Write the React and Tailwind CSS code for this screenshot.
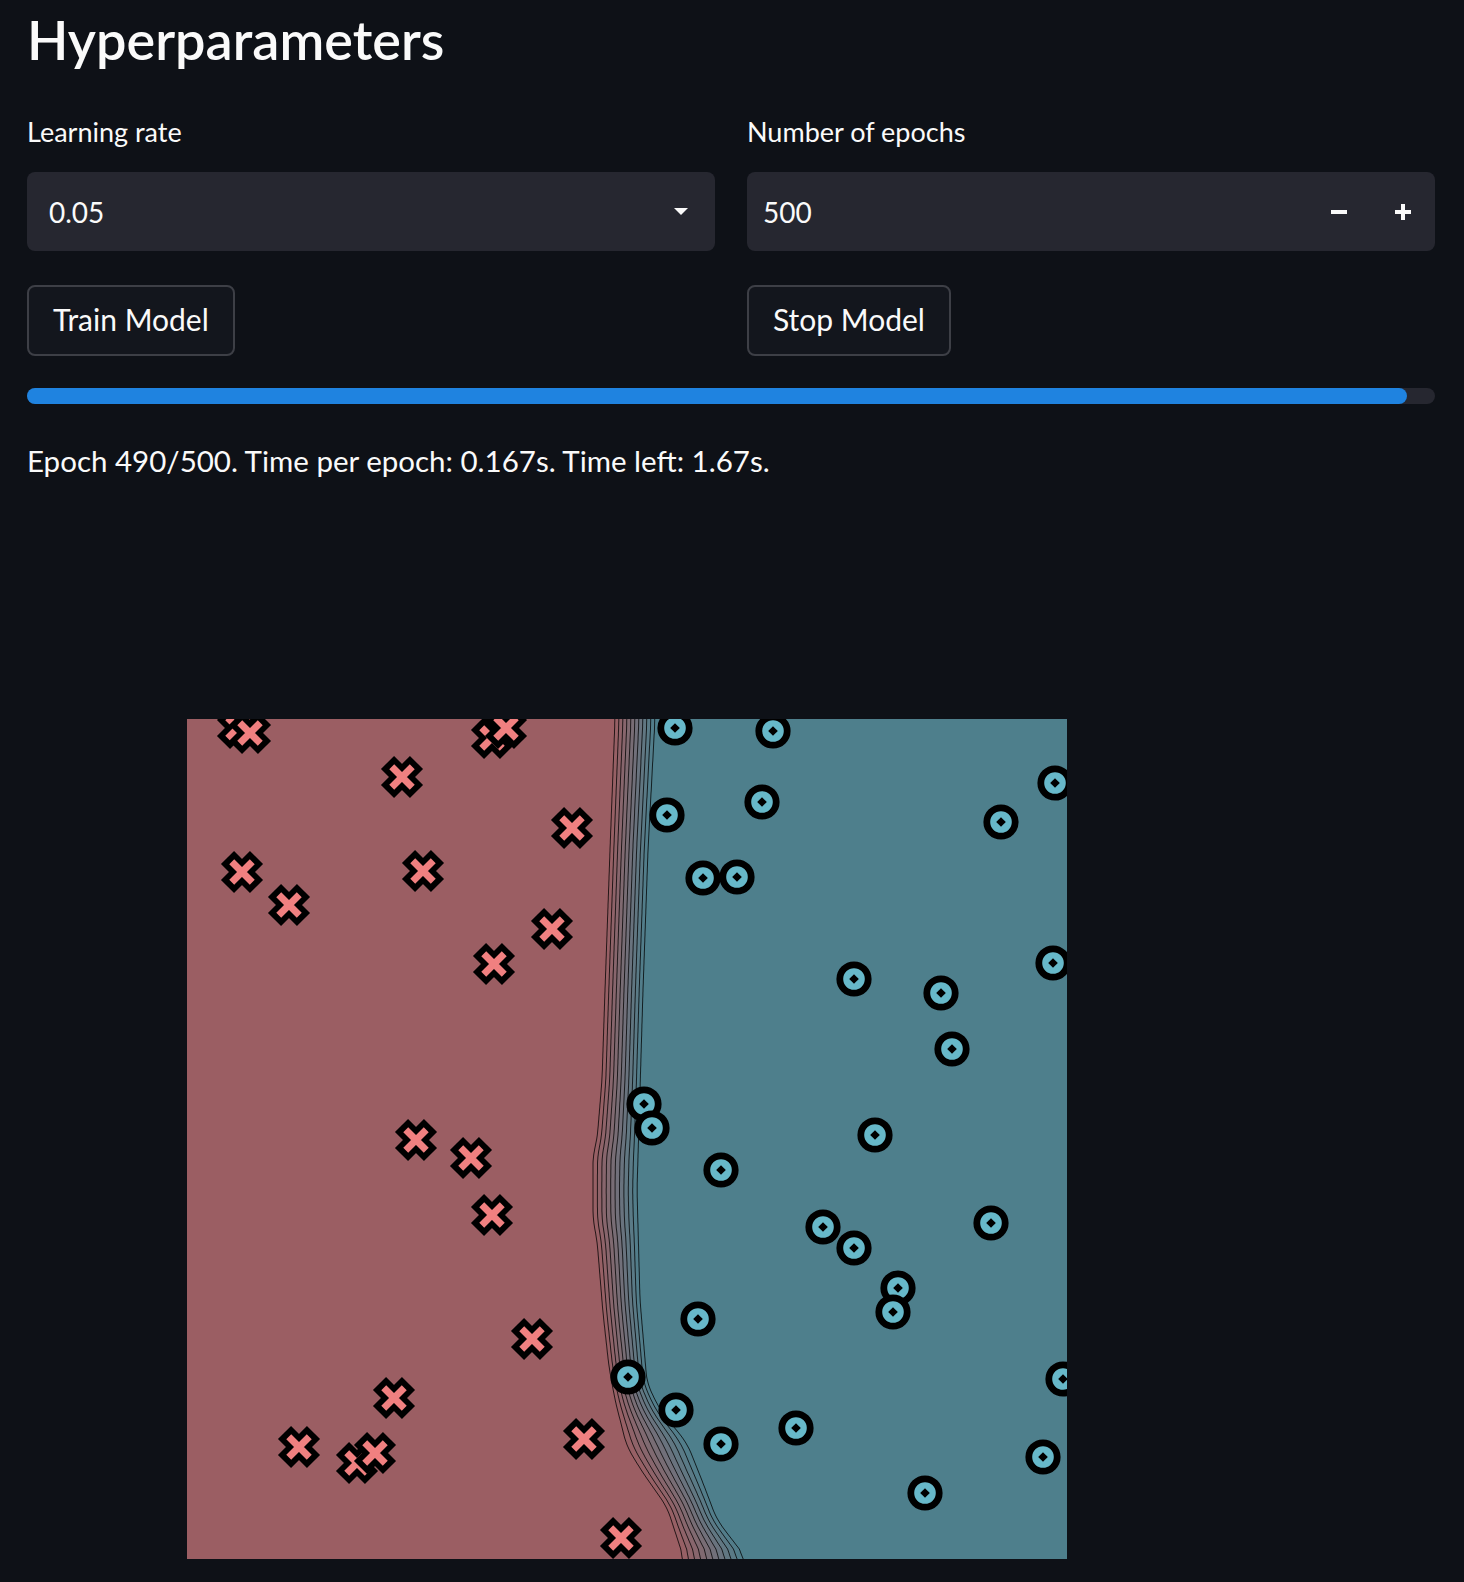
const RED = [155, 94, 99]
const TEAL = [78, 127, 140]
const OX = 187
const OY = 719

// boundary edges in page coords: [y, x]
const LEFT = [[719, 615], [850, 610], [990, 605], [1080, 602], [1140, 597], [1155, 593], [1220, 593], [1240, 597], [1313, 603], [1367, 609], [1400, 615], [1447, 627], [1473, 643], [1507, 667], [1559, 684]]
const RIGHT = [[719, 655], [850, 648], [990, 643], [1190, 637], [1300, 640], [1383, 647], [1410, 660], [1443, 687], [1483, 703], [1520, 717], [1559, 747]]

const CROSSES = [[238, 728], [250, 733], [492, 738], [506, 728], [402, 777], [572, 828], [242, 872], [423, 871], [289, 905], [552, 929], [494, 964], [416, 1140], [471, 1158], [492, 1215], [532, 1339], [394, 1398], [299, 1447], [357, 1463], [375, 1453], [584, 1439], [621, 1538]]
const DOTS = [[675, 728], [773, 731], [1055, 783], [667, 815], [762, 802], [1001, 822], [703, 878], [737, 877], [854, 979], [941, 993], [1053, 963], [952, 1049], [644, 1104], [652, 1128], [875, 1135], [721, 1170], [823, 1227], [854, 1248], [991, 1223], [898, 1288], [893, 1312], [698, 1319], [1063, 1379], [628, 1377], [676, 1410], [721, 1444], [796, 1428], [1043, 1457], [925, 1493]]

function interp(pts, y) {
  if (y <= pts[0][0]) return pts[0][1]
  for (let i = 1; i < pts.length; i++) {
    if (y <= pts[i][0]) {
      const [y0, x0] = pts[i - 1]
      const [y1, x1] = pts[i]
      return x0 + ((x1 - x0) * (y - y0)) / (y1 - y0)
    }
  }
  return pts[pts.length - 1][1]
}

function smooth(arr, k) {
  return arr.map((_, i) => {
    let s = 0
    let n = 0
    for (let j = i - k; j <= i + k; j++) {
      if (j >= 0 && j < arr.length) {
        s += arr[j]
        n++
      }
    }
    return s / n
  })
}

const ys = []
for (let y = 719; y <= 1560; y += 2) ys.push(y)
const lx = smooth(ys.map((y) => interp(LEFT, y)), 5)
const rx = smooth(ys.map((y) => interp(RIGHT, y)), 5)
const N = 11
const lines = Array.from({ length: N }, (_, i) => ys.map((y, k) => [lx[k] + ((rx[k] - lx[k]) * i) / (N - 1) - OX, y - OY]))

function mix(t) {
  const c = RED.map((v, i) => Math.round(v + (TEAL[i] - v) * t))
  return `rgb(${c[0]},${c[1]},${c[2]})`
}

function leftPoly(line) {
  const pts = line.map(([x, y]) => `${x.toFixed(1)},${y}`).join(' ')
  return `0,0 ${pts} 0,${line[line.length - 1][1]}`
}

function Cross({ x, y }) {
  const a = 20.5
  const b = 14.5
  return (
    <g transform={`translate(${x - OX} ${y - OY}) rotate(45)`}>
      <path d={`M${-a} 0H${a}M0 ${-a}V${a}`} stroke="#000" strokeWidth="18.5" />
      <path d={`M${-b} 0H${b}M0 ${-b}V${b}`} stroke="#f08080" strokeWidth="7" />
    </g>
  )
}

function Dot({ x, y }) {
  return (
    <g transform={`translate(${x - OX} ${y - OY})`}>
      <circle r="14.2" fill="#67b8c9" stroke="#000" strokeWidth="6.8" />
      <path d="M0 -4.8L4.8 0L0 4.8L-4.8 0Z" fill="#000" />
    </g>
  )
}

function Plot() {
  return (
    <svg width="880" height="840" viewBox="0 0 880 840" className="block">
      <rect width="880" height="840" fill={mix(1)} />
      {lines
        .slice(1)
        .map((line, i) => ({ line, t: (i + 0.5) / (N - 1) }))
        .reverse()
        .map(({ line, t }, i) => (
          <polygon key={i} points={leftPoly(line)} fill={mix(t)} />
        ))}
      <polygon points={leftPoly(lines[0])} fill={mix(0)} />
      {lines.map((line, i) => (
        <polyline
          key={i}
          points={line.map(([x, y]) => `${x.toFixed(1)},${y}`).join(' ')}
          fill="none"
          stroke="#000"
          strokeOpacity="0.85"
          strokeWidth="0.9"
        />
      ))}
      {CROSSES.map(([x, y], i) => (
        <Cross key={i} x={x} y={y} />
      ))}
      {DOTS.map(([x, y], i) => (
        <Dot key={i} x={x} y={y} />
      ))}
    </svg>
  )
}

export default function App() {
  return (
    <div className="min-h-screen bg-[#0e1117] pl-[27px] pr-[29px] pt-[6px] pb-[23px] text-[#fafafa] font-['Lato',sans-serif]">
      <h2 className="text-[54px] font-semibold leading-[67px]">Hyperparameters</h2>

      <div className="mt-[42px] grid grid-cols-2 gap-x-[32px]">
        <div>
          <label className="block text-[27px] leading-[34px]">Learning rate</label>
          <div className="mt-[23px] flex h-[79px] items-center justify-between rounded-[8px] bg-[#262730] pl-[22px] pr-[27px]">
            <span className="text-[28px]">0.05</span>
            <svg width="14" height="7" viewBox="0 0 14 7">
              <path d="M0 0H14L7 7Z" fill="#fafafa" />
            </svg>
          </div>
          <button className="mt-[34px] h-[71px] rounded-[8px] border-2 border-[#3d3f46] bg-[#13161d] px-[24px] pb-[2px] text-[30px]">
            Train Model
          </button>
        </div>
        <div>
          <label className="block text-[27px] leading-[34px]">Number of epochs</label>
          <div className="mt-[23px] flex h-[79px] items-center rounded-[8px] bg-[#262730] pl-[16px] pr-[24px]">
            <span className="flex-1 text-[28px]">500</span>
            <svg width="16" height="16" viewBox="0 0 16 16" className="mr-[48px]">
              <rect x="0" y="6" width="16" height="4" fill="#fafafa" />
            </svg>
            <svg width="16" height="16" viewBox="0 0 16 16">
              <rect x="0" y="6" width="16" height="4" fill="#fafafa" />
              <rect x="6" y="0" width="4" height="16" fill="#fafafa" />
            </svg>
          </div>
          <button className="mt-[34px] h-[71px] rounded-[8px] border-2 border-[#3d3f46] bg-[#13161d] px-[24px] pb-[2px] text-[30px]">
            Stop Model
          </button>
        </div>
      </div>

      <div className="mt-[32px] h-[16px] w-full rounded-full bg-[#262730]">
        <div className="h-full rounded-full bg-[#1f83e0]" style={{ width: `${(490 / 500) * 100}%` }} />
      </div>

      <p className="mt-[38px] text-[29.5px] leading-[38px]">Epoch 490/500. Time per epoch: 0.167s. Time left: 1.67s.</p>

      <div className="mt-[239px] ml-[160px]">
        <Plot />
      </div>
    </div>
  )
}
